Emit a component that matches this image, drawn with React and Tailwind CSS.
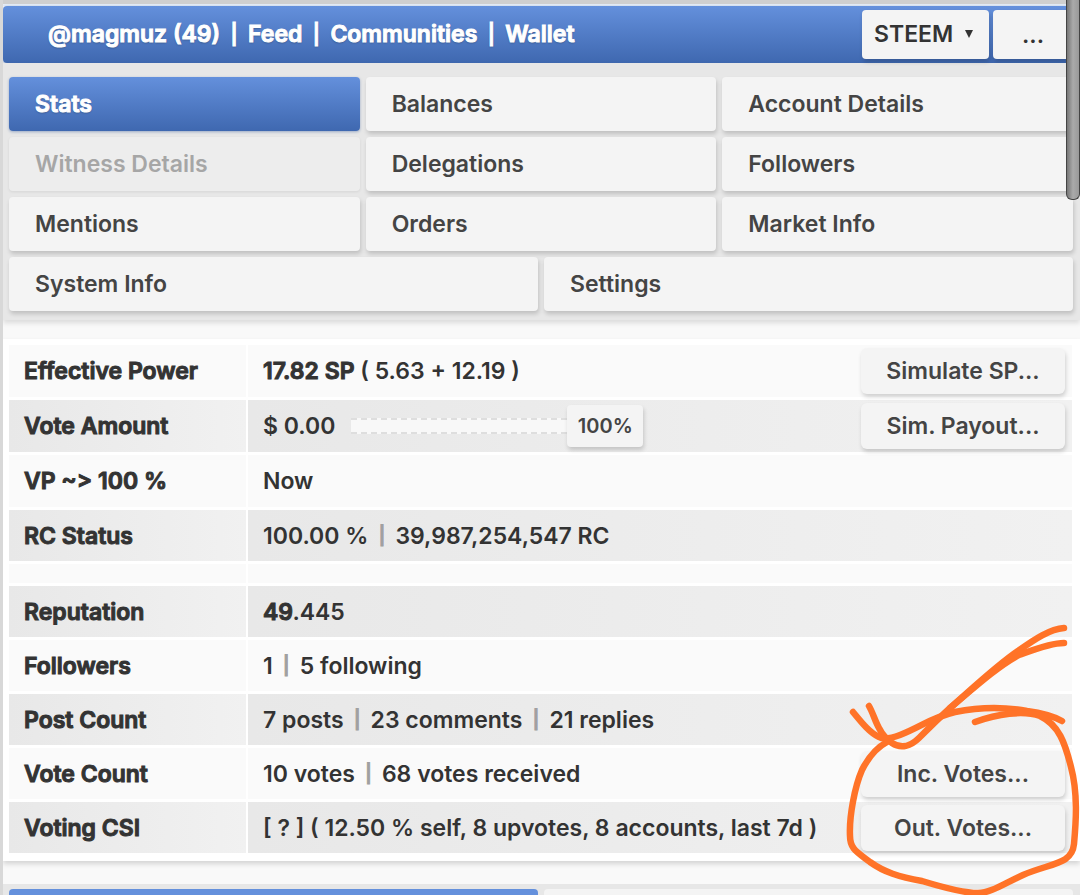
import { Fragment } from 'react';

const tabs = [
  { name: 'Stats', active: true },
  { name: 'Balances' },
  { name: 'Account Details' },
  { name: 'Witness Details', disabled: true },
  { name: 'Delegations' },
  { name: 'Followers' },
  { name: 'Mentions' },
  { name: 'Orders' },
  { name: 'Market Info' },
];

const wideTabs = [{ name: 'System Info' }, { name: 'Settings' }];

const links = ['@magmuz (49)', 'Feed', 'Communities', 'Wallet'];

const blue = 'bg-linear-to-b from-[#6490dc] to-[#3f68b0]';
const raised = 'bg-[#f4f4f4] shadow-[1px_3px_4px_rgba(0,0,0,0.17)]';
const heavy = '[-webkit-text-stroke:1px_#333]';
const heavyWhite = 'text-white [-webkit-text-stroke:1px_white] [text-shadow:0_1px_2px_rgba(0,0,0,0.35)]';

function Tab({ name, active, disabled }) {
  let look = `${raised} text-[#444]`;
  if (active) {
    look = `${blue} ${heavyWhite} shadow-[0_1px_3px_rgba(40,80,150,0.4)]`;
  }
  if (disabled) {
    look = 'bg-[#ededed] text-[#a6a6a6] shadow-[0_1px_3px_rgba(0,0,0,0.08)]';
  }
  return (
    <button type="button" disabled={disabled} className={`h-[54px] rounded px-[26px] text-left ${look}`}>
      {name}
    </button>
  );
}

function Parts({ items }) {
  return (
    <div className="flex items-center">
      {items.map((item, i) => (
        <Fragment key={item}>
          {i > 0 && (
            <span className="mx-2 w-[11px] text-center text-[18px] text-[#a0a0a0] [-webkit-text-stroke:1px_#a0a0a0]">
              |
            </span>
          )}
          <span>{item}</span>
        </Fragment>
      ))}
    </div>
  );
}

function PowerSlider() {
  return (
    <div className="flex items-center gap-4">
      <span>$ 0.00</span>
      <div className="relative flex items-center">
        <div className="h-4 w-[216px] border-y-2 border-dashed border-[#dedede] bg-[#f8f8f8]" />
        <span className={`flex h-[42px] w-[76px] items-center justify-center rounded text-[20px] text-[#444] ${raised}`}>
          100%
        </span>
        <input
          type="range"
          aria-label="Vote weight"
          min="0"
          max="100"
          defaultValue="100"
          className="absolute inset-0 h-full w-full cursor-pointer opacity-0"
        />
      </div>
    </div>
  );
}

const rows = [
  {
    label: 'Effective Power',
    tall: true,
    value: (
      <>
        <span className={heavy}>17.82 SP</span> ( 5.63 + 12.19 )
      </>
    ),
    action: 'Simulate SP...',
  },
  { label: 'Vote Amount', tall: true, value: <PowerSlider />, action: 'Sim. Payout...' },
  { label: 'VP ~> 100 %', tall: true, value: 'Now' },
  { label: 'RC Status', value: <Parts items={['100.00 %', '39,987,254,547 RC']} /> },
  null,
  {
    label: 'Reputation',
    value: (
      <>
        <span className={heavy}>49</span>.445
      </>
    ),
  },
  { label: 'Followers', value: <Parts items={['1', '5 following']} /> },
  { label: 'Post Count', value: <Parts items={['7 posts', '23 comments', '21 replies']} /> },
  { label: 'Vote Count', value: <Parts items={['10 votes', '68 votes received']} />, action: 'Inc. Votes...' },
  { label: 'Voting CSI', value: '[ ? ] ( 12.50 % self, 8 upvotes, 8 accounts, last 7d )', action: 'Out. Votes...' },
];

function Row({ row, odd }) {
  const shade = odd
    ? 'bg-linear-to-r from-[#e8e8e8] to-[#f1f1f1]'
    : 'bg-[#fafafa]';
  if (!row) {
    return (
      <tr>
        <td className={`h-[19px] ${shade}`} />
        <td className={shade} />
      </tr>
    );
  }
  return (
    <tr>
      <th
        scope="row"
        className={`w-[237px] px-[15px] text-left font-semibold ${heavy} ${row.tall ? 'h-[52px]' : 'h-[51px]'} ${shade}`}
      >
        {row.label}
      </th>
      <td className={`pl-[15px] pr-[7px] ${shade}`}>
        <div className="flex items-center justify-between">
          <div>{row.value}</div>
          {row.action && (
            <button type="button" className={`h-[46px] w-[204px] rounded-md text-[#444] ${raised}`}>
              {row.action}
            </button>
          )}
        </div>
      </td>
    </tr>
  );
}

function Scribble() {
  return (
    <svg
      viewBox="0 0 260 295"
      className="pointer-events-none absolute right-0 bottom-0 h-[295px] w-[260px]"
      fill="none"
      stroke="#ff7328"
      strokeWidth="6.5"
      strokeLinecap="round"
      strokeLinejoin="round"
      aria-hidden="true"
    >
      <path d="M244 28C230 29 215 39 198 51C176 66 153 88 129 109C118 119 108 129 99 138C91 146 81 149 72 143C66 139 62 134 59 128C55 121 53 113 49 106" />
      <path d="M244 43C230 43 213 50 199 55C177 67 155 87 130 108" />
      <path d="M33 112C42 123 50 133 59 137C64 140 72 138 80 135C101 127 110 118 135 112C160 107 185 107 207 111C222 113 233 116 242 121" />
      <path d="M155 122C177 114 203 110 220 116C239 125 245 143 251 167C258 193 256 222 254 244C252 265 230 263 203 275C185 283 171 293 158 293C145 293 125 288 102 281C79 277 64 272 50 262C37 252 30 249 30 236C29 216 35 186 42 170C48 158 56 148 67 142" />
    </svg>
  );
}

export default function App() {
  return (
    <div className="relative flex min-h-screen flex-col overflow-hidden border-l-3 border-[#d8d8d8] bg-[#f9f9f9] font-['Inter','Liberation_Sans',sans-serif] text-[23px] leading-7 font-semibold text-[#333]">
      <div className="h-[6px] border-b-2 border-[#e6edf7] bg-[#cfcfcf]" />
      <header className={`flex h-[57px] items-center justify-between rounded-l pr-[7px] pl-[45px] shadow-[0_1px_3px_rgba(40,80,150,0.5)] ${blue}`}>
        <nav className={`flex items-center pb-[2px] ${heavyWhite}`}>
          {links.map((link, i) => (
            <Fragment key={link}>
              {i > 0 && <span className="mx-2 w-3 text-center text-[20px]">|</span>}
              <a href="#">{link}</a>
            </Fragment>
          ))}
        </nav>
        <div className="flex gap-1">
          <div className="relative">
            <select
              aria-label="Chain"
              className={`h-[49px] w-[127px] appearance-none rounded pb-[2px] pl-3 ${raised}`}
            >
              <option>STEEM</option>
            </select>
            <svg viewBox="0 0 8 8" className="pointer-events-none absolute top-5 right-4 size-2" aria-hidden="true">
              <path d="M0 0h8L4 8z" fill="#333" />
            </svg>
          </div>
          <button type="button" className={`h-[49px] w-20 rounded ${raised}`}>
            ...
          </button>
        </div>
      </header>

      <div className="bg-[#e7e7e7] pt-[14px] pr-[7px] pb-[9px] pl-[6px] shadow-[0_3px_5px_rgba(0,0,0,0.12)]">
        <div className="grid grid-cols-3 gap-[6px]">
          {tabs.map((tab) => (
            <Tab key={tab.name} {...tab} />
          ))}
        </div>
        <div className="mt-[6px] grid grid-cols-2 gap-[6px]">
          {wideTabs.map((tab) => (
            <Tab key={tab.name} {...tab} />
          ))}
        </div>
      </div>

      <main className="mt-[19px] bg-white pt-[3px] pr-[6px] pb-[5px] pl-1 shadow-[0_3px_5px_rgba(0,0,0,0.15)]">
        <table className="w-full border-separate border-spacing-x-[2px] border-spacing-y-[3px]">
          <tbody>
            {rows.map((row, i) => (
              <Row key={row ? row.label : 'gap'} row={row} odd={i % 2 === 1} />
            ))}
          </tbody>
        </table>
      </main>

      <div className="mt-[23px] grid min-h-[11px] flex-1 grid-cols-2 gap-[6px] bg-[#e7e7e7] pt-[5px] pr-[7px] pl-[6px]">
        <div className="rounded-t bg-[#6490dc]" />
        <div className="rounded-t bg-[#f4f4f4]" />
      </div>

      <Scribble />
      <div className="absolute top-0 right-0 h-[200px] w-[14px] rounded-b-md border border-t-0 border-[#444] bg-linear-to-r from-[#777] via-[#aaa] to-[#999]" />
    </div>
  );
}
